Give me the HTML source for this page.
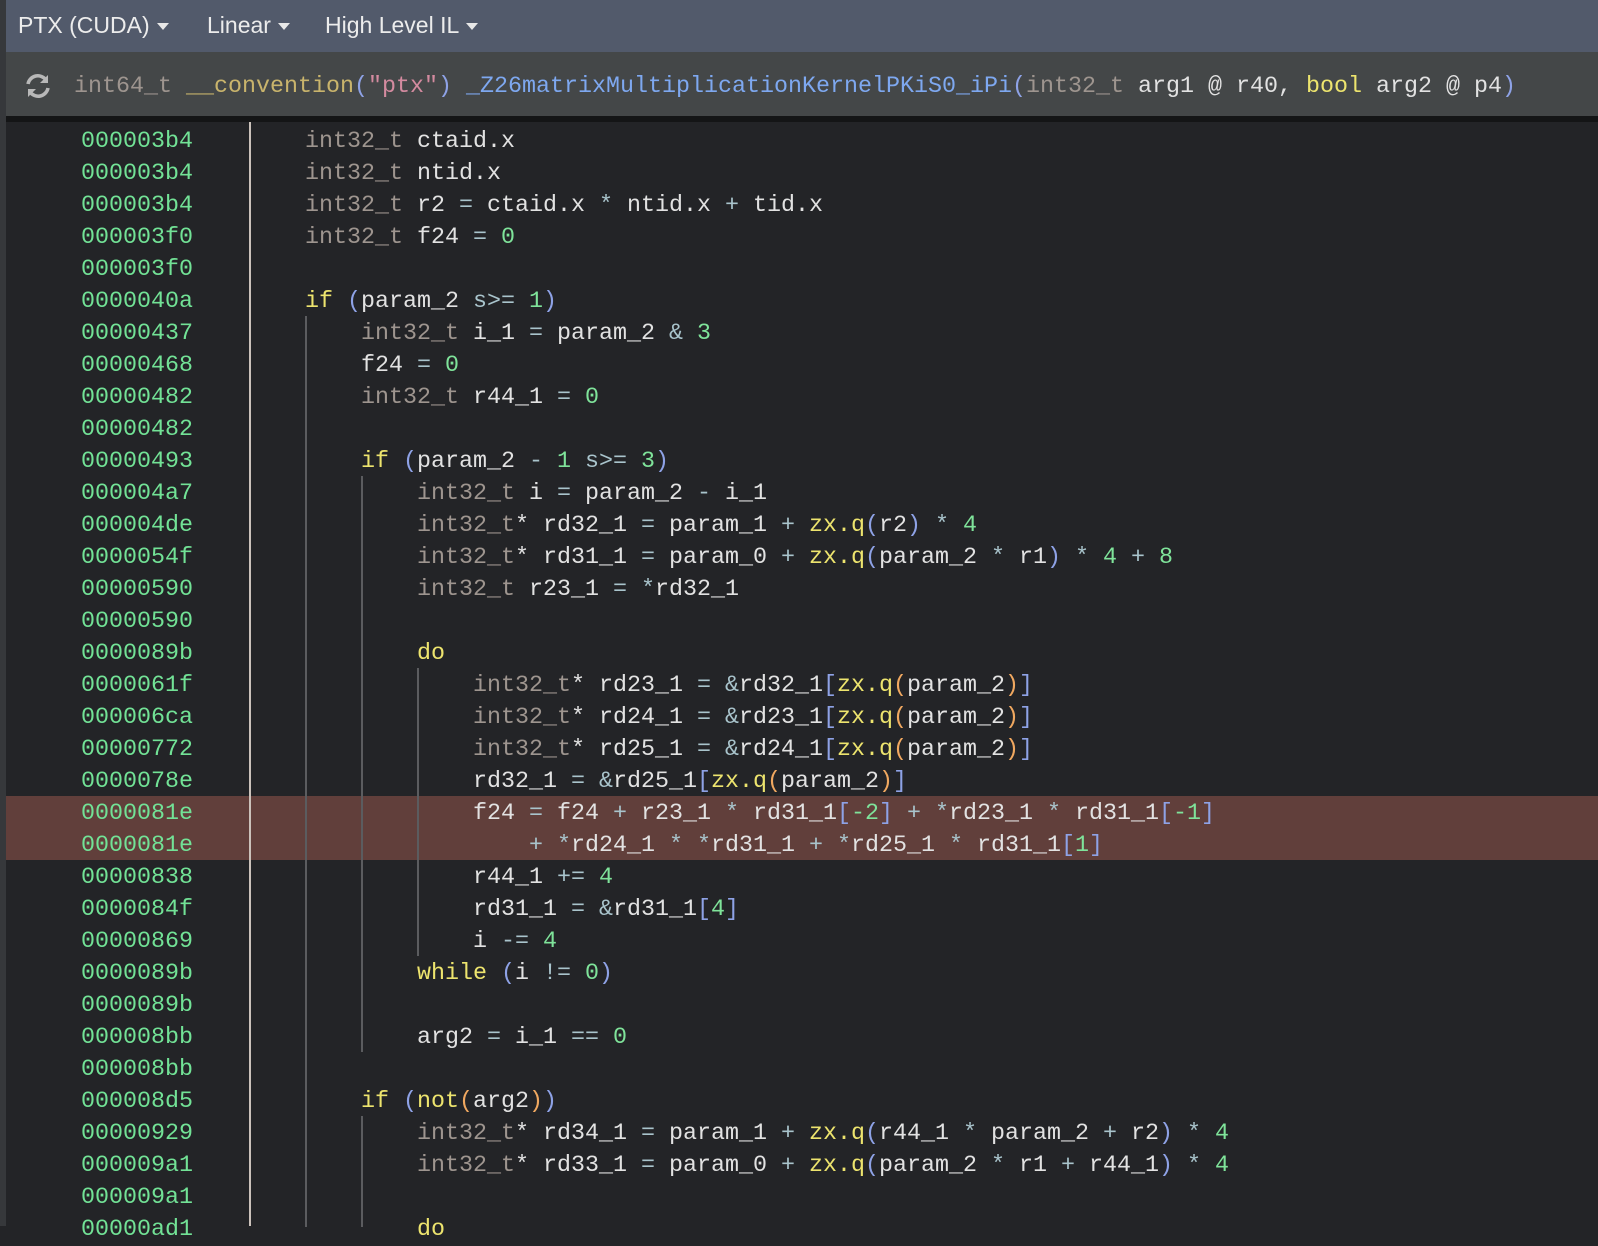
<!DOCTYPE html>
<html><head><meta charset="utf-8"><style>
*{margin:0;padding:0;box-sizing:border-box}
body{width:1598px;height:1226px;overflow:hidden;background:#232427;position:relative;font-family:"Liberation Mono",monospace;}
#hdr{position:absolute;left:0;top:0;width:1598px;height:52px;background:#525a6b;font-family:"Liberation Sans",sans-serif;font-size:23px;color:#ececec}
#hdr span{position:absolute;top:12px}
.tri{display:inline-block;width:0;height:0;border-left:6px solid transparent;border-right:6px solid transparent;border-top:7px solid #e8e8e8;margin-left:7px;vertical-align:middle}
#bar{position:absolute;left:0;top:52px;width:1598px;height:65px;background:#444748}
#blk{position:absolute;left:0;top:116px;width:1598px;height:6px;background:#141516}
#lb{position:absolute;left:0;top:0;width:6px;height:1226px;background:#36383b}
.m{font-size:23.33px;white-space:pre;position:absolute;line-height:32px;color:#e2e2e2}
.t{color:#9e958f}.k{color:#ede46e}.n{color:#7fe39a}.o{color:#a9c4cc}.b1{color:#8ea2e6}.b2{color:#f0a860}
.a{color:#72e296}
.g{position:absolute;width:2px;background:#5b5c5f}
.hl{position:absolute;left:6px;width:1592px;height:64px;top:795.5px;background:#613f3b}
</style></head><body>
<div id="hdr"><span style="left:18px">PTX (CUDA)<i class="tri"></i></span><span style="left:207px">Linear<i class="tri"></i></span><span style="left:325px">High Level IL<i class="tri"></i></span></div>
<div id="bar">
<svg style="position:absolute;left:23px;top:19px" width="30" height="30" viewBox="0 0 30 30"><path d="M5 13 A10 10 0 0 1 23 9" stroke="#b8b8b8" stroke-width="3.5" fill="none"/><path d="M25 4 L25 12 L17 12 Z" fill="#b8b8b8"/><path d="M25 17 A10 10 0 0 1 7 21" stroke="#b8b8b8" stroke-width="3.5" fill="none"/><path d="M5 26 L5 18 L13 18 Z" fill="#b8b8b8"/></svg>
<div class="m" style="left:74px;top:19px"><span class="t">int64_t</span> <span style="color:#c9b46c">__convention</span><span class="b1">(</span><span style="color:#d48ba0">"ptx"</span><span class="b1">)</span> <span style="color:#7ea8f0">_Z26matrixMultiplicationKernelPKiS0_iPi</span><span class="b1">(</span><span class="t">int32_t</span> arg1 @ r40, <span class="k">bool</span> arg2 @ p4<span class="b1">)</span></div>
</div>
<div id="blk"></div>
<div class="hl"></div>
<div id="lb"></div>
<div class="g" style="left:249px;top:122px;height:1104px;background:#cbc2bb"></div>
<div class="g" style="left:305px;top:315.5px;height:911px"></div>
<div class="g" style="left:361px;top:475.5px;height:576px"></div>
<div class="g" style="left:417px;top:667.5px;height:288px"></div>
<div class="g" style="left:361px;top:1115.5px;height:111px"></div>
<div class="m a" style="left:81px;top:126px">000003b4
000003b4
000003b4
000003f0
000003f0
0000040a
00000437
00000468
00000482
00000482
00000493
000004a7
000004de
0000054f
00000590
00000590
0000089b
0000061f
000006ca
00000772
0000078e
0000081e
0000081e
00000838
0000084f
00000869
0000089b
0000089b
000008bb
000008bb
000008d5
00000929
000009a1
000009a1
00000ad1</div>
<div class="m" style="left:305px;top:126px"><span class="t">int32_t</span> ctaid.x
<span class="t">int32_t</span> ntid.x
<span class="t">int32_t</span> r2 <span class="o">=</span> ctaid.x <span class="o">*</span> ntid.x <span class="o">+</span> tid.x
<span class="t">int32_t</span> f24 <span class="o">=</span> <span class="n">0</span>

<span class="k">if</span> <span class="b1">(</span>param_2 <span class="o">s&gt;=</span> <span class="n">1</span><span class="b1">)</span>
    <span class="t">int32_t</span> i_1 <span class="o">=</span> param_2 <span class="o">&amp;</span> <span class="n">3</span>
    f24 <span class="o">=</span> <span class="n">0</span>
    <span class="t">int32_t</span> r44_1 <span class="o">=</span> <span class="n">0</span>

    <span class="k">if</span> <span class="b1">(</span>param_2 <span class="o">-</span> <span class="n">1</span> <span class="o">s&gt;=</span> <span class="n">3</span><span class="b1">)</span>
        <span class="t">int32_t</span> i <span class="o">=</span> param_2 <span class="o">-</span> i_1
        <span class="t">int32_t</span>* rd32_1 <span class="o">=</span> param_1 <span class="o">+</span> <span class="k">zx.q</span><span class="b1">(</span>r2<span class="b1">)</span> <span class="o">*</span> <span class="n">4</span>
        <span class="t">int32_t</span>* rd31_1 <span class="o">=</span> param_0 <span class="o">+</span> <span class="k">zx.q</span><span class="b1">(</span>param_2 <span class="o">*</span> r1<span class="b1">)</span> <span class="o">*</span> <span class="n">4</span> <span class="o">+</span> <span class="n">8</span>
        <span class="t">int32_t</span> r23_1 <span class="o">=</span> <span class="o">*</span>rd32_1

        <span class="k">do</span>
            <span class="t">int32_t</span>* rd23_1 <span class="o">=</span> <span class="o">&amp;</span>rd32_1<span class="b1">[</span><span class="k">zx.q</span><span class="b2">(</span>param_2<span class="b2">)</span><span class="b1">]</span>
            <span class="t">int32_t</span>* rd24_1 <span class="o">=</span> <span class="o">&amp;</span>rd23_1<span class="b1">[</span><span class="k">zx.q</span><span class="b2">(</span>param_2<span class="b2">)</span><span class="b1">]</span>
            <span class="t">int32_t</span>* rd25_1 <span class="o">=</span> <span class="o">&amp;</span>rd24_1<span class="b1">[</span><span class="k">zx.q</span><span class="b2">(</span>param_2<span class="b2">)</span><span class="b1">]</span>
            rd32_1 <span class="o">=</span> <span class="o">&amp;</span>rd25_1<span class="b1">[</span><span class="k">zx.q</span><span class="b2">(</span>param_2<span class="b2">)</span><span class="b1">]</span>
            f24 <span class="o">=</span> f24 <span class="o">+</span> r23_1 <span class="o">*</span> rd31_1<span class="b1">[</span><span class="n">-2</span><span class="b1">]</span> <span class="o">+</span> <span class="o">*</span>rd23_1 <span class="o">*</span> rd31_1<span class="b1">[</span><span class="n">-1</span><span class="b1">]</span>
                <span class="o">+</span> <span class="o">*</span>rd24_1 <span class="o">*</span> <span class="o">*</span>rd31_1 <span class="o">+</span> <span class="o">*</span>rd25_1 <span class="o">*</span> rd31_1<span class="b1">[</span><span class="n">1</span><span class="b1">]</span>
            r44_1 <span class="o">+=</span> <span class="n">4</span>
            rd31_1 <span class="o">=</span> <span class="o">&amp;</span>rd31_1<span class="b1">[</span><span class="n">4</span><span class="b1">]</span>
            i <span class="o">-=</span> <span class="n">4</span>
        <span class="k">while</span> <span class="b1">(</span>i <span class="o">!=</span> <span class="n">0</span><span class="b1">)</span>

        arg2 <span class="o">=</span> i_1 <span class="o">==</span> <span class="n">0</span>

    <span class="k">if</span> <span class="b1">(</span><span class="k">not</span><span class="b2">(</span>arg2<span class="b2">)</span><span class="b1">)</span>
        <span class="t">int32_t</span>* rd34_1 <span class="o">=</span> param_1 <span class="o">+</span> <span class="k">zx.q</span><span class="b1">(</span>r44_1 <span class="o">*</span> param_2 <span class="o">+</span> r2<span class="b1">)</span> <span class="o">*</span> <span class="n">4</span>
        <span class="t">int32_t</span>* rd33_1 <span class="o">=</span> param_0 <span class="o">+</span> <span class="k">zx.q</span><span class="b1">(</span>param_2 <span class="o">*</span> r1 <span class="o">+</span> r44_1<span class="b1">)</span> <span class="o">*</span> <span class="n">4</span>

        <span class="k">do</span></div>
</body></html>
